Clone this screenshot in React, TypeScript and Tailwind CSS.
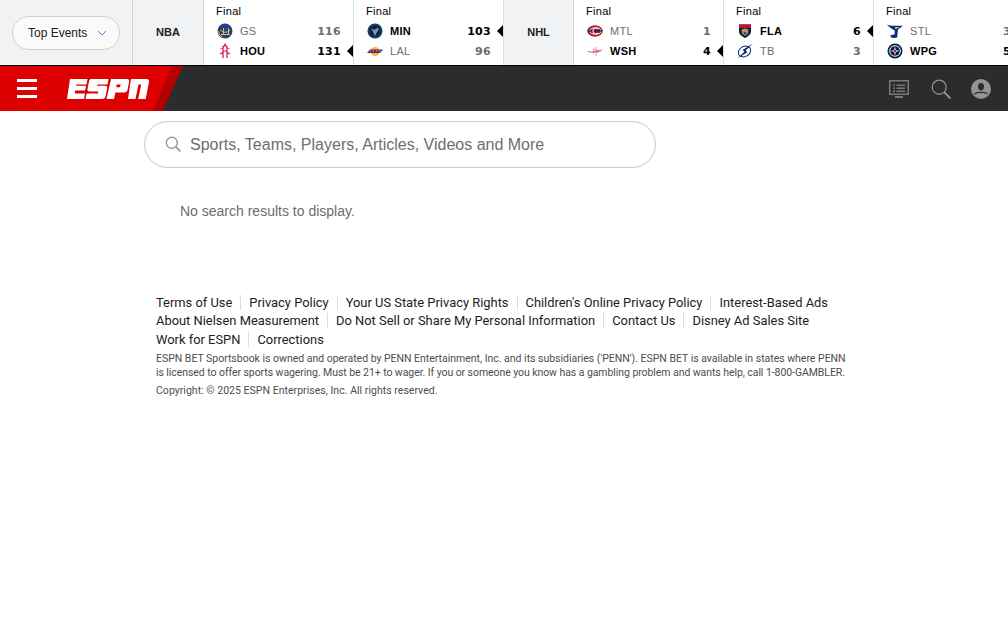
import { ReactNode } from 'react';

type Team = { abbr: string; score: number; winner?: boolean; logo: ReactNode };

const GS = (
  <svg viewBox="0 0 16 16" className="h-4 w-4">
    <circle cx="8" cy="8" r="7.500" fill="#1d428a" />
    <path d="M1.500 8a6.500 6.500 0 0 0 4 6" stroke="#fdb927" strokeWidth="1" fill="none" />
    <path d="M4 11.500h9M6.500 12V5M11.500 11.500V5M3.500 7c2 3 7 3 9.500 0" stroke="#fdb927" strokeWidth="1" fill="none" />
  </svg>
);
const HOU = (
  <svg viewBox="0 0 16 16" className="h-4 w-4">
    <path d="M6 3v12M10 3v12M3.500 5.500C5.500 5 7 4 8 1.500 9 4 10.500 5 12.500 5.500M6 8h4M3 11l3-1.500M13 11l-3-1.500" stroke="#ce1141" strokeWidth="1.200" fill="none" />
  </svg>
);
const MIN = (
  <svg viewBox="0 0 16 16" className="h-4 w-4">
    <circle cx="8" cy="8" r="7.500" fill="#0c2340" />
    <circle cx="8" cy="8" r="6.400" fill="none" stroke="#236192" strokeWidth="0.800" />
    <path d="M4 5l3 2 3-2 2 1-2 3-2 4-2-4z" fill="#7d98ae" />
  </svg>
);
const LAL = (
  <svg viewBox="0 0 16 16" className="h-4 w-4">
    <circle cx="8" cy="8.500" r="4.500" fill="#fdb927" />
    <path d="M0 10L3 6.500h13L13 10z" fill="#552583" />
    <path d="M3 9l1.500-2M6 9l1-2M9 9l1-2M12 9l1-2" stroke="#fdb927" strokeWidth="0.700" />
  </svg>
);
const MTL = (
  <svg viewBox="0 0 16 16" className="h-4 w-4">
    <ellipse cx="8" cy="8" rx="7.700" ry="5.800" fill="#af1e2d" />
    <ellipse cx="8.500" cy="8" rx="5.800" ry="3.200" fill="none" stroke="#fff" strokeWidth="1" />
    <rect x="0.500" y="6.800" width="15" height="2.400" fill="#192168" opacity="0.700" />
    <path d="M11 5.800A3 3 0 1 0 11 10.200" stroke="#fff" strokeWidth="1" fill="none" />
  </svg>
);
const WSH = (
  <svg viewBox="0 0 16 16" className="h-4 w-4" opacity="0.700">
    <path d="M0 8.500c3-.6 3 .8 6 0l3-.8c2-.5 4-.5 7-1.200-2 1.800-4 2.600-7 2.800-3 .4-6 .8-9-.8z" fill="#c8102e" />
    <path d="M9 4v9M7 6l2 1M6.500 5.500v5M11 6v4" stroke="#c8102e" strokeWidth="0.600" />
  </svg>
);
const FLA = (
  <svg viewBox="0 0 16 16" className="h-4 w-4">
    <path d="M2 1.500h12v7c0 3-3 5-6 6.500-3-1.500-6-3.500-6-6.500z" fill="#041e42" />
    <path d="M2 1.500h12v3.500H2z" fill="#c8102e" />
    <path d="M4.500 6.500L8 5.500l3.500 1-.5 4L8 13l-3-2.500z" fill="#b9975b" />
    <path d="M6 9.500l2 2 2-2z" fill="#041e42" />
  </svg>
);
const TB = (
  <svg viewBox="0 0 16 16" className="h-4 w-4">
    <ellipse cx="7.500" cy="8.500" rx="6.500" ry="5" transform="rotate(-30 7.500 8.500)" fill="none" stroke="#002868" strokeWidth="1" />
    <path d="M16 0.500L5.500 7l2 1.500L0.500 15.500l10-6.500-2-1.500z" fill="#002868" />
  </svg>
);
const STL = (
  <svg viewBox="0 0 16 16" className="h-4 w-4">
    <path d="M0 1.500c2 1 4 1.200 6 1.200h10L11 6.500l-.7 6H7.500l.2-5C5 6 2 4 0 1.500z" fill="#002f87" />
    <path d="M8 4h4.500L10 5.800H8z" fill="#fcb514" />
    <ellipse cx="7" cy="13.300" rx="3.500" ry="1.700" fill="#002f87" />
  </svg>
);
const WPG = (
  <svg viewBox="0 0 16 16" className="h-4 w-4">
    <circle cx="8" cy="8" r="7.500" fill="#041e42" />
    <circle cx="8" cy="8" r="5.800" fill="#fff" />
    <circle cx="8" cy="8" r="4.800" fill="#041e42" />
    <path d="M8 3.500l1 3.500 3.500 1-3.500 1-1 3.500-1-3.500-3.500-1 3.500-1z" fill="#d9dce0" />
    <circle cx="8" cy="8" r="1.200" fill="#ac162c" />
  </svg>
);

const sections: { league: string; width: string; games: [Team, Team][] }[] = [
  {
    league: 'NBA',
    width: 'w-[71px]',
    games: [
      [
        { abbr: 'GS', score: 116, logo: GS },
        { abbr: 'HOU', score: 131, winner: true, logo: HOU },
      ],
      [
        { abbr: 'MIN', score: 103, winner: true, logo: MIN },
        { abbr: 'LAL', score: 96, logo: LAL },
      ],
    ],
  },
  {
    league: 'NHL',
    width: 'w-[70px]',
    games: [
      [
        { abbr: 'MTL', score: 1, logo: MTL },
        { abbr: 'WSH', score: 4, winner: true, logo: WSH },
      ],
      [
        { abbr: 'FLA', score: 6, winner: true, logo: FLA },
        { abbr: 'TB', score: 3, logo: TB },
      ],
      [
        { abbr: 'STL', score: 3, logo: STL },
        { abbr: 'WPG', score: 5, winner: true, logo: WPG },
      ],
    ],
  },
];

const footerLinks = [
  ['Terms of Use', 'Privacy Policy', 'Your US State Privacy Rights', "Children's Online Privacy Policy", 'Interest-Based Ads'],
  ['About Nielsen Measurement', 'Do Not Sell or Share My Personal Information', 'Contact Us', 'Disney Ad Sales Site'],
  ['Work for ESPN', 'Corrections'],
];

function TeamRow({ team }: { team: Team }) {
  return (
    <div className="relative flex h-5 items-center pl-[13px] pr-3">
      <span className="flex w-[23px] shrink-0">{team.logo}</span>
      <span className={`text-[11px] tracking-[0.3px] ${team.winner ? 'font-bold text-black' : 'text-[#6c6d6f]'}`}>
        {team.abbr}
      </span>
      <span
        className={`ml-auto mt-[2px] whitespace-nowrap font-['DejaVu_Sans'] text-[11px] font-bold tracking-[0.3px] ${team.winner ? 'text-black' : 'text-[#6c6d6f]'}`}
      >
        {team.score}
      </span>
      {team.winner && (
        <span className="absolute right-0 top-1/2 h-0 w-0 -translate-y-1/2 border-y-[6px] border-r-[6px] border-y-transparent border-r-black" />
      )}
    </div>
  );
}

function Game({ teams }: { teams: [Team, Team] }) {
  return (
    <div className="flex h-full w-[150px] shrink-0 flex-col border-r border-[#dcdddf] bg-white pt-[3px]">
      <div className="mb-[2px] h-[16px] pl-[12px] text-[11px] leading-4 tracking-[0.3px] text-black">Final</div>
      <TeamRow team={teams[0]} />
      <TeamRow team={teams[1]} />
    </div>
  );
}

function EspnLogo() {
  return (
    <svg viewBox="0 0 82 20" className="h-[20px] w-[82px]" fill="#fff">
      <path d="M3 0H20.500l-1 5.500H9.400l-.3 1.300h9.900l-.9 4.700H8.200l-.4 2.900h10.300L17 20H0z" />
      <path d="M24 0H41.500l-1 5.500H30.300l-.3 1.300h8.200c1.500 0 2.300 1 2 2.500l-1.700 8.200C38.200 19 37 20 35.300 20H18.500l1.200-5.600h11.200l.3-1.800H22.500c-1.500 0-2.300-1-2-2.500L22 2.500C22.400 1 23 0 24 0z" />
      <path d="M44 0h16c1.700 0 2.500 1 2.200 2.500L60.500 11c-.4 1.500-1.500 2.500-3 2.500H48.300L47 20H39.500zM49.800 5.500L49.200 8.300h3.800l.6-2.800z" />
      <path d="M64 0h15.500c2 0 2.800 1 2.500 3L78.700 20h-7.500l3-14.500H71.500L68.500 20H61z" />
    </svg>
  );
}

export default function App() {
  return (
    <div className="min-h-[621px] bg-white font-['Liberation_Sans',sans-serif]">
      <div className="flex h-[66px] overflow-hidden border-b border-black bg-[#f1f2f3]">
        <div className="flex w-[133px] shrink-0 items-center border-r border-[#d5d6d8] pl-3">
          <button className="flex h-[34px] w-[108px] items-center justify-between rounded-full border border-[#d0d1d3] bg-[#fafafa] pl-[15px] pr-[12px] text-[12px] text-[#1f2022]">
            Top Events
            <svg viewBox="0 0 10 6" className="h-[6px] w-[10px]" fill="none" stroke="#3d87d6" strokeWidth="1">
              <path d="M1 1l4 4 4-4" />
            </svg>
          </button>
        </div>
        {sections.map((section) => (
          <div key={section.league} className="flex shrink-0">
            <div
              className={`flex ${section.width} items-center justify-center border-r border-[#d5d6d8] bg-[#f1f2f3] text-[11px] font-bold text-[#1f2022]`}
            >
              {section.league}
            </div>
            {section.games.map((teams) => (
              <Game key={teams[0].abbr} teams={teams} />
            ))}
          </div>
        ))}
      </div>

      <header className="relative flex h-[45px] items-center overflow-hidden bg-[#2b2c2d]">
        <div className="absolute left-0 top-0 h-full w-[183px] bg-[#b30000] [clip-path:polygon(0_0,100%_0,89%_100%,0_100%)]" />
        <div className="absolute left-0 top-0 h-full w-[172px] bg-[#dd0000] [clip-path:polygon(0_0,100%_0,89%_100%,0_100%)]" />
        <div className="relative ml-[17px] flex w-5 flex-col gap-[5px]">
          <span className="h-[3px] bg-white" />
          <span className="h-[3px] bg-white" />
          <span className="h-[3px] bg-white" />
        </div>
        <div className="relative ml-[30px] flex">
          <EspnLogo />
        </div>
        <div className="relative ml-auto flex items-center gap-5 pr-[17px]">
          <svg viewBox="0 0 20 20" className="mr-[2px] h-5 w-5" fill="#77787a">
            <path d="M0 1h20v15H0zM1.500 2.500v12h17v-12z" fillRule="evenodd" />
            <path d="M4 5.500h2V7H4zM7.500 5.500H16V7H7.500zM4 8.500h2V10H4zM7.500 8.500H16V10H7.500zM4 11.500h2V13H4zM7.500 11.500H16V13H7.500zM6 17h8v2H6z" />
          </svg>
          <svg viewBox="0 0 20 20" className="h-5 w-5" fill="none" stroke="#949597" strokeWidth="1.200">
            <circle cx="8.200" cy="8.200" r="7" />
            <path d="M13 13l6.500 6.500" strokeWidth="1.800" />
          </svg>
          <svg viewBox="0 0 20 20" className="h-5 w-5">
            <circle cx="10" cy="10" r="10" fill="#949597" />
            <path d="M10 4c2 0 3 1.500 3 3.500S12 11.500 10 11.500 7 9.500 7 7.500 8 4 10 4z" fill="#2b2c2d" />
            <path d="M3 14.500C5 13 8 12.800 10 12.800s5 .2 7 1.700c-1.500 2.500-4 4-7 4s-5.500-1.500-7-4z" fill="#2b2c2d" />
            <path d="M3.500 15.500C5.500 14.300 8 14 10 14s4.500.3 6.500 1.500c-1.500 2-3.800 3.500-6.500 3.500s-5-1.500-6.500-3.500z" fill="#949597" />
          </svg>
        </div>
      </header>

      <main className="w-[700px] pl-[144px]">
        <div className="mt-[10px] flex h-[47px] w-[512px] items-center rounded-full border border-[#c9cacc] pl-[20px] shadow-[inset_0_0_2px_rgba(0,0,0,0.08)]">
          <svg viewBox="0 0 16 16" className="-mt-[2px] h-[16px] w-[16px]" fill="none" stroke="#97989b" strokeWidth="1.400">
            <circle cx="6.800" cy="6.800" r="5.500" />
            <path d="M10.800 10.800l4.500 4.500" strokeWidth="1.800" />
          </svg>
          <span className="ml-[9px] text-[16px] text-[#6d6e70]">Sports, Teams, Players, Articles, Videos and More</span>
        </div>
        <p className="mt-[35px] pl-[36px] text-[14px] leading-4 text-[#6c6d6f]">No search results to display.</p>
      </main>

      <footer className="mt-[74px] w-[700px] pl-[156px] font-['Roboto',sans-serif]">
        <div className="w-[700px]">
          {footerLinks.map((row) => (
            <div key={row[0]} className="flex h-[18.500px] items-center">
              {row.map((link, i) => (
                <span
                  key={link}
                  className={`whitespace-nowrap text-[12.900px] leading-[15px] text-[#1f2022] ${i > 0 ? 'ml-2 border-l border-[#dcdddf] pl-2' : ''}`}
                >
                  {link}
                </span>
              ))}
            </div>
          ))}
          <p className="mt-[3px] whitespace-nowrap text-[10.500px] leading-[14px] text-[#4c4d4f]">
            <span className="tracking-[-0.014px]">
              ESPN BET Sportsbook is owned and operated by PENN Entertainment, Inc. and its subsidiaries ('PENN'). ESPN BET is available in states where PENN
            </span>
            <br />
            <span className="tracking-[-0.068px]">
              is licensed to offer sports wagering. Must be 21+ to wager. If you or someone you know has a gambling problem and wants help, call 1-800-GAMBLER.
            </span>
          </p>
          <p className="mt-[4px] text-[10.500px] leading-[13px] tracking-[0.03px] text-[#4c4d4f]">
            Copyright: © 2025 ESPN Enterprises, Inc. All rights reserved.
          </p>
        </div>
      </footer>
    </div>
  );
}
